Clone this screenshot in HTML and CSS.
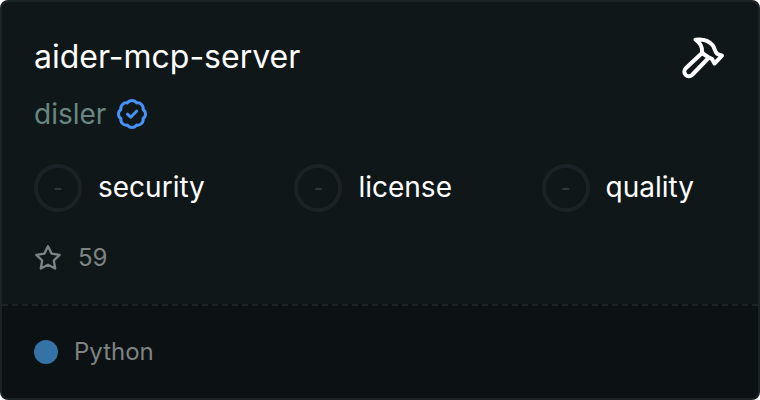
FILE: index.html
```html
<!DOCTYPE html>
<html lang="en">
<head>
  <meta charset="UTF-8" />
  <meta name="viewport" content="width=device-width, initial-scale=1.0" />
  <title>aider-mcp-server</title>
  <link rel="stylesheet" href="styles.css">
</head>
<body>

  <article class="card">
    <div class="card-main">
      <header class="card-header">
        <div class="card-title">
          <h1>aider-mcp-server</h1>
          <p class="author">
            <span>disler</span>
            <svg class="verified" viewBox="0 0 36 36" aria-hidden="true">
              <path d="M13.400 6.900A5.600 5.600 0 0 1 22.600 6.900A5.600 5.600 0 0 1 29.100 13.400A5.600 5.600 0 0 1 29.100 22.600A5.600 5.600 0 0 1 22.600 29.100A5.600 5.600 0 0 1 13.400 29.100A5.600 5.600 0 0 1 6.900 22.600A5.600 5.600 0 0 1 6.900 13.400A5.600 5.600 0 0 1 13.400 6.900z" />
              <path d="M13.500 18.200L16.700 21.200L22.500 15.200" />
            </svg>
          </p>
        </div>
        <svg class="hammer" viewBox="0 0 48 48" aria-hidden="true">
          <path d="M17.500 5.700C26 4.500 31 7 34.500 11C37 14 36.500 18 39.500 20L44 21.700L36.500 29.500L34 25L30 23L25.500 20L24 18C24.500 12.500 22.500 9 17.500 5.700z" />
          <path d="M23.500 19.500L7.500 34.500a4.600 4.600 0 0 0 6.500 6.500L30 24.500" />
        </svg>
      </header>

      <ul class="scores">
        <li><span class="grade">-</span>security</li>
        <li><span class="grade">-</span>license</li>
        <li><span class="grade">-</span>quality</li>
      </ul>

      <p class="stars">
        <svg class="star" viewBox="0 0 24 24" aria-hidden="true">
          <path d="M12 17.750l-6.172 3.245l1.179 -6.873l-5 -4.867l6.900 -1l3.086 -6.253l3.086 6.253l6.900 1l-5 4.867l1.179 6.873z" />
        </svg>
        <span>59</span>
      </p>
    </div>

    <footer class="card-footer">
      <span class="language-dot"></span>
      <span>Python</span>
    </footer>
  </article>

</body>
</html>
```

FILE: styles.css
```css
* {
  box-sizing: border-box;
}

body {
  margin: 0;
  font-family: Inter, sans-serif;
  background-color: #fff;
}

h1,
p,
ul {
  margin: 0;
  padding: 0;
}

svg {
  display: block;
  flex-shrink: 0;
  fill: none;
  stroke: currentColor;
  stroke-width: 2;
  stroke-linecap: round;
  stroke-linejoin: round;
}

.card {
  display: flex;
  flex-direction: column;
  min-height: 100vh;
  border: 2px solid #1c2325;
  border-radius: 8px;
  background-color: #0f1719;
  color: #fff;
  overflow: hidden;
}

.card-main {
  flex: 1;
  display: flex;
  flex-direction: column;
  gap: 30px;
  padding: 32px 32px 30px;
}

.card-header {
  display: flex;
  justify-content: space-between;
  align-items: flex-start;
}

.card-title {
  display: flex;
  flex-direction: column;
  gap: 14px;
}

.card-title h1 {
  font-size: 32px;
  font-weight: 400;
  line-height: 46px;
}

.author {
  display: flex;
  align-items: center;
  gap: 8px;
  color: #698780;
  font-size: 28px;
  line-height: 40px;
}

.verified {
  width: 36px;
  height: 36px;
  color: #4593f8;
  stroke-width: 3;
}

.hammer {
  width: 48px;
  height: 48px;
  stroke-width: 4;
}

.scores {
  display: flex;
  justify-content: space-between;
  padding-right: 32px;
  list-style: none;
  font-size: 28px;
  line-height: 46px;
}

.scores li {
  display: flex;
  gap: 16px;
}

.grade {
  display: flex;
  align-items: center;
  justify-content: center;
  width: 48px;
  height: 48px;
  border: 4px solid #1b2225;
  border-radius: 50%;
  color: #343535;
  font-size: 20px;
  font-weight: 600;
  line-height: 24px;
}

.stars {
  display: flex;
  align-items: center;
  gap: 16px;
  color: #7f8384;
  font-size: 24px;
  line-height: 32px;
}

.star {
  width: 28px;
  height: 28px;
}

.card-footer {
  display: flex;
  align-items: center;
  gap: 16px;
  padding: 28px 32px;
  border-top: 2px dashed #1c2325;
  background-color: #0c1113;
  color: #7f8384;
  font-size: 24px;
  line-height: 36px;
}

.language-dot {
  width: 24px;
  height: 24px;
  border-radius: 50%;
  background-color: #3572a5;
}
```
